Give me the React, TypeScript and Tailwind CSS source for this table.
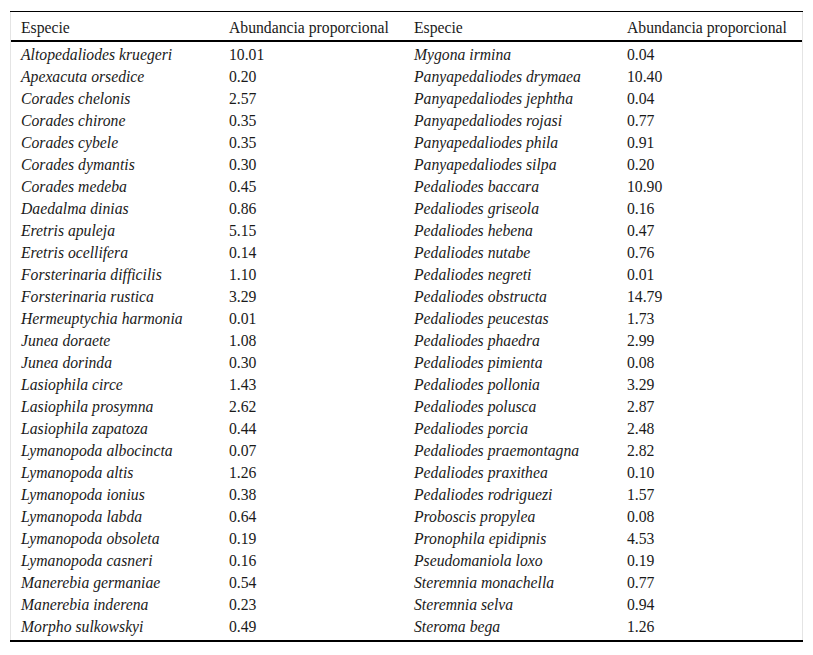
import React from "react";

const left: [string, string][] = [
  ["Altopedaliodes kruegeri", "10.01"],
  ["Apexacuta orsedice", "0.20"],
  ["Corades chelonis", "2.57"],
  ["Corades chirone", "0.35"],
  ["Corades cybele", "0.35"],
  ["Corades dymantis", "0.30"],
  ["Corades medeba", "0.45"],
  ["Daedalma dinias", "0.86"],
  ["Eretris apuleja", "5.15"],
  ["Eretris ocellifera", "0.14"],
  ["Forsterinaria difficilis", "1.10"],
  ["Forsterinaria rustica", "3.29"],
  ["Hermeuptychia harmonia", "0.01"],
  ["Junea doraete", "1.08"],
  ["Junea dorinda", "0.30"],
  ["Lasiophila circe", "1.43"],
  ["Lasiophila prosymna", "2.62"],
  ["Lasiophila zapatoza", "0.44"],
  ["Lymanopoda albocincta", "0.07"],
  ["Lymanopoda altis", "1.26"],
  ["Lymanopoda ionius", "0.38"],
  ["Lymanopoda labda", "0.64"],
  ["Lymanopoda obsoleta", "0.19"],
  ["Lymanopoda casneri", "0.16"],
  ["Manerebia germaniae", "0.54"],
  ["Manerebia inderena", "0.23"],
  ["Morpho sulkowskyi", "0.49"],
];

const right: [string, string][] = [
  ["Mygona irmina", "0.04"],
  ["Panyapedaliodes drymaea", "10.40"],
  ["Panyapedaliodes jephtha", "0.04"],
  ["Panyapedaliodes rojasi", "0.77"],
  ["Panyapedaliodes phila", "0.91"],
  ["Panyapedaliodes silpa", "0.20"],
  ["Pedaliodes baccara", "10.90"],
  ["Pedaliodes griseola", "0.16"],
  ["Pedaliodes hebena", "0.47"],
  ["Pedaliodes nutabe", "0.76"],
  ["Pedaliodes negreti", "0.01"],
  ["Pedaliodes obstructa", "14.79"],
  ["Pedaliodes peucestas", "1.73"],
  ["Pedaliodes phaedra", "2.99"],
  ["Pedaliodes pimienta", "0.08"],
  ["Pedaliodes pollonia", "3.29"],
  ["Pedaliodes polusca", "2.87"],
  ["Pedaliodes porcia", "2.48"],
  ["Pedaliodes praemontagna", "2.82"],
  ["Pedaliodes praxithea", "0.10"],
  ["Pedaliodes rodriguezi", "1.57"],
  ["Proboscis propylea", "0.08"],
  ["Pronophila epidipnis", "4.53"],
  ["Pseudomaniola loxo", "0.19"],
  ["Steremnia monachella", "0.77"],
  ["Steremnia selva", "0.94"],
  ["Steroma bega", "1.26"],
];

export default function App() {
  return (
    <div className="w-[813px] h-[655px] bg-white text-[#1a1a1a] text-[15.7px] leading-[22px] font-['Liberation_Serif']">
      <div className="h-[11px]" />
      <div className="ml-[10px] w-[793px] border-t border-b-2 border-black">
        <div className="border-x border-[#e4e4e4] pb-[4px]">
          <div className="grid grid-cols-[208px_185px_213px_185px] h-[30px] pt-[4px] items-center border-b-2 border-black">
            <div className="pl-[10px]">Especie</div>
            <div className="pl-[10px]">Abundancia proporcional</div>
            <div className="pl-[10px]">Especie</div>
            <div className="pl-[10px]">Abundancia proporcional</div>
          </div>
          {left.map((l, i) => (
            <div
              key={i}
              className="grid grid-cols-[208px_185px_213px_185px] h-[22px] pt-[2px] items-center"
            >
              <div className="pl-[10px] italic whitespace-nowrap">{l[0]}</div>
              <div className="pl-[10px]">{l[1]}</div>
              <div className="pl-[10px] italic whitespace-nowrap">{right[i][0]}</div>
              <div className="pl-[10px]">{right[i][1]}</div>
            </div>
          ))}
        </div>
      </div>
    </div>
  );
}
